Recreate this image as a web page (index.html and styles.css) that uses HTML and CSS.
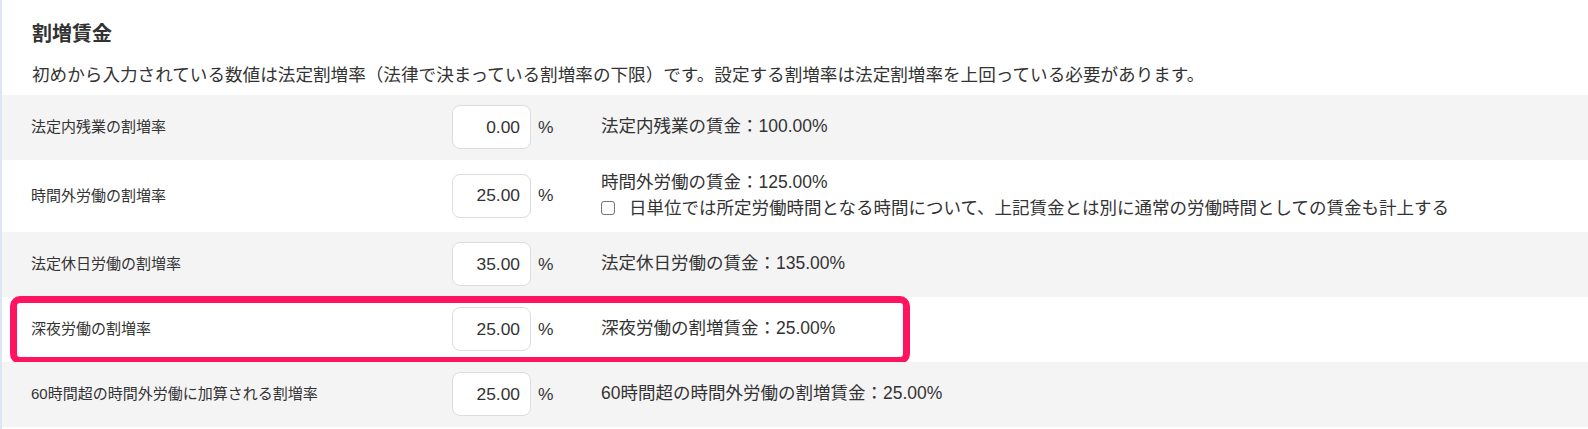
FILE: index.html
```html
<!DOCTYPE html>
<html lang="ja">
<head>
    <meta charset="UTF-8">
    <title>割増賃金</title>
    <link rel="stylesheet" href="styles.css">
</head>
<body class="page">
    <div class="rateSection">
        <div class="sectionHead">
            <h2 class="sectionTitle">割増賃金</h2>
            <p class="sectionNote">初めから入力されている数値は法定割増率（法律で決まっている割増率の下限）です。設定する割増率は法定割増率を上回っている必要があります。</p>
        </div>

        <div class="rateRow shaded">
            <div class="rateLabel">法定内残業の割増率</div>
            <input class="rateInput" type="text" value="0.00">
            <span class="percent">%</span>
            <div class="rateResult">法定内残業の賃金：100.00%</div>
        </div>

        <div class="rateRow">
            <div class="rateLabel">時間外労働の割増率</div>
            <input class="rateInput" type="text" value="25.00">
            <span class="percent">%</span>
            <div class="rateResult">
                <div>時間外労働の賃金：125.00%</div>
                <label class="checkLine">
                    <input class="checkBox" type="checkbox">
                    <span>日単位では所定労働時間となる時間について、上記賃金とは別に通常の労働時間としての賃金も計上する</span>
                </label>
            </div>
        </div>

        <div class="rateRow shaded">
            <div class="rateLabel">法定休日労働の割増率</div>
            <input class="rateInput" type="text" value="35.00">
            <span class="percent">%</span>
            <div class="rateResult">法定休日労働の賃金：135.00%</div>
        </div>

        <div class="rateRow marked">
            <div class="rateLabel">深夜労働の割増率</div>
            <input class="rateInput" type="text" value="25.00">
            <span class="percent">%</span>
            <div class="rateResult">深夜労働の割増賃金：25.00%</div>
            <span class="markBox"></span>
        </div>

        <div class="rateRow shaded">
            <div class="rateLabel">60時間超の時間外労働に加算される割増率</div>
            <input class="rateInput" type="text" value="25.00">
            <span class="percent">%</span>
            <div class="rateResult">60時間超の時間外労働の割増賃金：25.00%</div>
        </div>
    </div>
</body>
</html>
```

FILE: styles.css
```css
.page {
    margin: 0;
    background-color: #fff;
    color: #333;
    font-family: "Liberation Sans", "Noto Sans CJK JP", sans-serif;
}

.rateSection {
    border-left: 2px solid #dce6f5;
    min-height: 100vh;
}

.sectionHead {
    padding: 20px 0 7px 30px;
}

.sectionTitle {
    margin: 0;
    font-size: 20px;
    line-height: 28px;
    font-weight: bold;
    color: #333;
}

.sectionNote {
    margin: 14px 0 0 0;
    font-size: 17.6px;
    line-height: 26px;
}

.rateRow {
    position: relative;
    display: grid;
    grid-template-columns: 421px 79px 70px 1fr;
    align-items: center;
    padding: 10px 0 11px 29px;
    background-color: #fff;
}

.shaded {
    background-color: #f5f4f5;
}

.rateLabel {
    font-size: 15px;
    line-height: 22px;
}

.rateInput {
    box-sizing: border-box;
    width: 79px;
    height: 44px;
    margin: 0;
    padding: 0 10px;
    border: 1px solid #dddddd;
    border-radius: 8px;
    background-color: #fff;
    color: #333;
    font-family: inherit;
    font-size: 17.4px;
    text-align: right;
    outline: none;
}

.percent {
    padding-left: 7px;
    font-size: 17.4px;
}

.rateResult {
    font-size: 17.5px;
    line-height: 25.5px;
}

.checkLine {
    display: flex;
    align-items: center;
}

.checkBox {
    appearance: none;
    box-sizing: border-box;
    width: 14px;
    height: 14px;
    margin: 0 14px 0 0;
    border: 1.5px solid #767676;
    border-radius: 3px;
    background-color: #fff;
}

/* pink frame drawn over the night work row */
.markBox {
    position: absolute;
    top: -1px;
    bottom: -2px;
    left: 8px;
    width: 900px;
    box-sizing: border-box;
    border: 7px solid #ff1460;
    border-radius: 10px;
    pointer-events: none;
}
```
